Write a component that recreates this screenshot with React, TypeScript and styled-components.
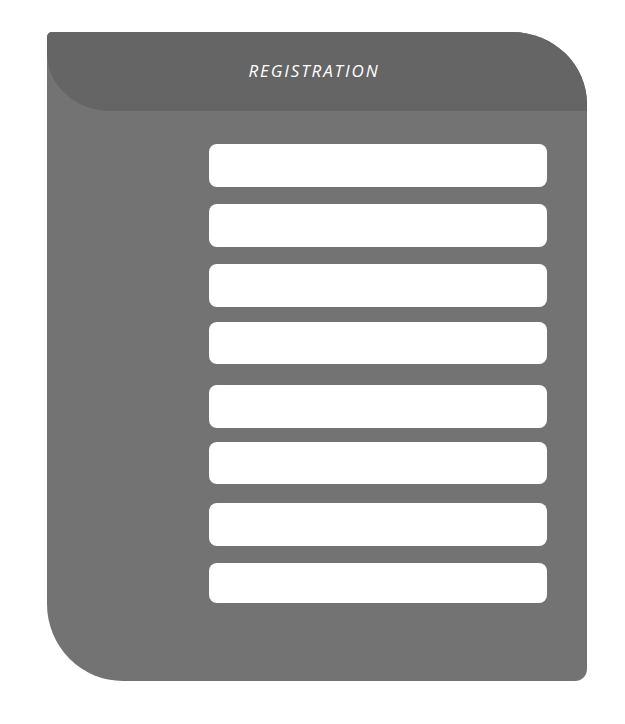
import React from "react";
import styled, { createGlobalStyle } from "styled-components";

const GlobalStyle = createGlobalStyle`
  html, body { margin: 0; padding: 0; background: #ffffff; }
  body { font-family: "Open Sans", "Liberation Sans", sans-serif; }
`;

const Page = styled.div`
  padding: 32px 0 0 47px;
`;

const Card = styled.form`
  width: 540px;
  height: 649px;
  background: #737373;
  border-radius: 5px 75px 12px 76px / 5px 72px 12px 77px;
  overflow: hidden;
  display: flex;
  flex-direction: column;
`;

const Header = styled.div`
  height: 79px;
  flex: none;
  background: #656565;
  border-bottom-left-radius: 63px 58px;
  display: flex;
  align-items: center;
  justify-content: center;
  padding-right: 6px;
  padding-bottom: 3px;
  box-sizing: border-box;
`;

const Title = styled.h1`
  margin: 0;
  font-family: "Open Sans", sans-serif;
  font-style: italic;
  font-weight: 400;
  font-size: 17px;
  letter-spacing: 1.9px;
  color: #ffffff;
`;

const Fields = styled.div`
  display: flex;
  flex-direction: column;
  padding: 33px 39px 0 162px;
`;

const Input = styled.input<{ $mt: number; $h?: number }>`
  display: block;
  box-sizing: border-box;
  width: 338px;
  height: ${(p) => p.$h ?? 43}px;
  margin: ${(p) => p.$mt}px 0 0 0;
  border: none;
  border-radius: 8px;
  background: #ffffff;
  outline: none;
  padding: 0 12px;
  font-family: "Open Sans", sans-serif;
  font-size: 14px;
`;

const fields = [
  { mt: 0, h: 43 },
  { mt: 17, h: 43 },
  { mt: 17, h: 43 },
  { mt: 15, h: 42 },
  { mt: 21, h: 43 },
  { mt: 14, h: 42 },
  { mt: 19, h: 43 },
  { mt: 17, h: 40 },
];

export default function App() {
  return (
    <>
      <GlobalStyle />
      <Page>
        <Card onSubmit={(e) => e.preventDefault()}>
          <Header>
            <Title>REGISTRATION</Title>
          </Header>
          <Fields>
            {fields.map((f, i) => (
              <Input key={i} type="text" $mt={f.mt} $h={f.h} />
            ))}
          </Fields>
        </Card>
      </Page>
    </>
  );
}
